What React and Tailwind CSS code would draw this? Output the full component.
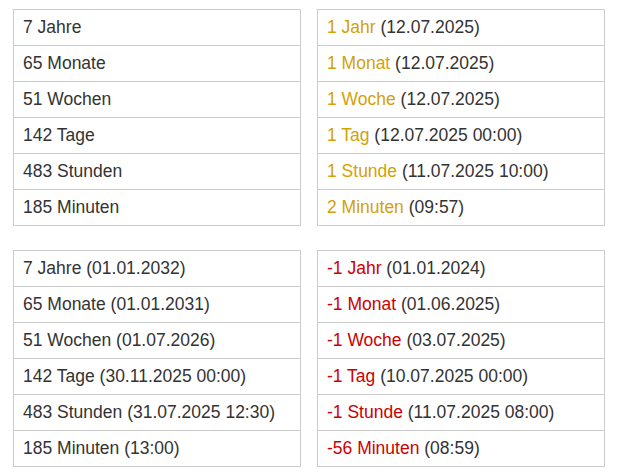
import React from 'react';

const GOLD = 'text-[#d4a106]';
const RED = 'text-[#cc0000]';

const tables = [
  {
    rows: [
      ['7 Jahre'],
      ['65 Monate'],
      ['51 Wochen'],
      ['142 Tage'],
      ['483 Stunden'],
      ['185 Minuten'],
    ],
  },
  {
    tone: GOLD,
    rows: [
      ['1 Jahr', '(12.07.2025)'],
      ['1 Monat', '(12.07.2025)'],
      ['1 Woche', '(12.07.2025)'],
      ['1 Tag', '(12.07.2025 00:00)'],
      ['1 Stunde', '(11.07.2025 10:00)'],
      ['2 Minuten', '(09:57)'],
    ],
  },
  {
    rows: [
      ['7 Jahre', '(01.01.2032)'],
      ['65 Monate', '(01.01.2031)'],
      ['51 Wochen', '(01.07.2026)'],
      ['142 Tage', '(30.11.2025 00:00)'],
      ['483 Stunden', '(31.07.2025 12:30)'],
      ['185 Minuten', '(13:00)'],
    ],
  },
  {
    tone: RED,
    rows: [
      ['-1 Jahr', '(01.01.2024)'],
      ['-1 Monat', '(01.06.2025)'],
      ['-1 Woche', '(03.07.2025)'],
      ['-1 Tag', '(10.07.2025 00:00)'],
      ['-1 Stunde', '(11.07.2025 08:00)'],
      ['-56 Minuten', '(08:59)'],
    ],
  },
];

const Table = ({ rows, tone }) => (
  <div className="border border-[#cccccc] bg-white">
    {rows.map(([label, extra], i) => (
      <div
        key={i}
        className={`flex items-center pl-[9px] ${i > 0 ? 'border-t border-[#cccccc] h-[36px]' : 'h-[35px]'}`}
      >
        <p className="whitespace-nowrap">
          <span className={tone || ''}>{label}</span>
          {extra ? ' ' + extra : null}
        </p>
      </div>
    ))}
  </div>
);

export default function App() {
  return (
    <div
      className="min-h-[476px] bg-white pl-[13px] pt-[9px] text-[17.5px] text-[#333333]"
      style={{ fontFamily: '"Liberation Sans", Arial, sans-serif' }}
    >
      <div className="grid grid-cols-[288px_288px] gap-x-4 gap-y-6">
        {tables.map((t, i) => (
          <Table key={i} rows={t.rows} tone={t.tone} />
        ))}
      </div>
    </div>
  );
}
